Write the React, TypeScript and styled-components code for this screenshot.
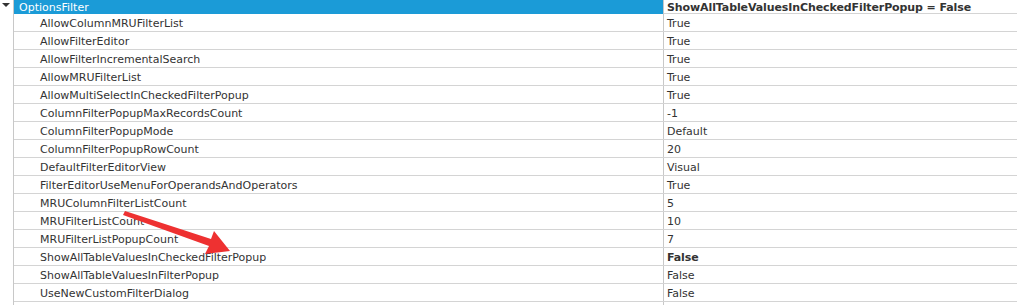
import React from "react";
import styled, { createGlobalStyle } from "styled-components";

const Global = createGlobalStyle`
  html, body { margin: 0; padding: 0; background: #ffffff; }
  body { font-family: "DejaVu Sans", Verdana, sans-serif; }
`;

const Grid = styled.div`
  position: relative;
  width: 1017px;
  height: 305px;
  overflow: hidden;
  display: grid;
  grid-template-columns: 14px 1fr;
  background: #fff;
`;

const Gutter = styled.div`
  border-right: 1px solid #c8c8c8;
`;

const Caret = styled.div`
  width: 0;
  height: 0;
  margin: 3px 0 0 2px;
  border-left: 4px solid transparent;
  border-right: 4px solid transparent;
  border-top: 4px solid #333;
`;

const Body = styled.div`
  display: flex;
  flex-direction: column;
`;

const Row = styled.div<{ $header?: boolean }>`
  display: grid;
  grid-template-columns: 650px 1fr;
  height: ${(p) => (p.$header ? "13px" : "17px")};
  border-bottom: 1px solid #d4d4d4;
  flex-shrink: 0;
`;

const NameCell = styled.div<{ $header?: boolean }>`
  display: flex;
  align-items: center;
  padding-left: ${(p) => (p.$header ? "5px" : "26px")};
  padding-top: 1px;
  background: ${(p) => (p.$header ? "#1b9bd7" : "#fff")};
  color: ${(p) => (p.$header ? "#ffffff" : "#333333")};
  font-size: 11px;
  font-family: "DejaVu Sans", Verdana, sans-serif;
  white-space: nowrap;
  border-right: 1px solid #c8c8c8;
`;

const ValueCell = styled.div<{ $bold?: boolean }>`
  display: flex;
  align-items: center;
  padding-left: 3px;
  padding-top: 1px;
  color: #333333;
  font-size: 11px;
  font-family: "DejaVu Sans", Verdana, sans-serif;
  font-weight: ${(p) => (p.$bold ? 700 : 400)};
  letter-spacing: ${(p) => (p.$bold ? "-0.1px" : "0")};
  white-space: nowrap;
`;

const Arrow = styled.svg`
  position: absolute;
  left: 0;
  top: 0;
  pointer-events: none;
`;

const rows: [string, string, boolean?][] = [
  ["AllowColumnMRUFilterList", "True"],
  ["AllowFilterEditor", "True"],
  ["AllowFilterIncrementalSearch", "True"],
  ["AllowMRUFilterList", "True"],
  ["AllowMultiSelectInCheckedFilterPopup", "True"],
  ["ColumnFilterPopupMaxRecordsCount", "-1"],
  ["ColumnFilterPopupMode", "Default"],
  ["ColumnFilterPopupRowCount", "20"],
  ["DefaultFilterEditorView", "Visual"],
  ["FilterEditorUseMenuForOperandsAndOperators", "True"],
  ["MRUColumnFilterListCount", "5"],
  ["MRUFilterListCount", "10"],
  ["MRUFilterListPopupCount", "7"],
  ["ShowAllTableValuesInCheckedFilterPopup", "False", true],
  ["ShowAllTableValuesInFilterPopup", "False"],
  ["UseNewCustomFilterDialog", "False"],
  ["", ""],
];

export default function App() {
  return (
    <>
      <Global />
      <Grid>
        <Gutter>
          <Caret />
        </Gutter>
        <Body>
          <Row $header>
            <NameCell $header>OptionsFilter</NameCell>
            <ValueCell $bold>ShowAllTableValuesInCheckedFilterPopup = False</ValueCell>
          </Row>
          {rows.map(([n, v, b], i) => (
            <Row key={i}>
              <NameCell>{n}</NameCell>
              <ValueCell $bold={!!b}>{v}</ValueCell>
            </Row>
          ))}
        </Body>
        <Arrow width="1017" height="305" viewBox="0 0 1017 305">
          <polygon
            points="125,211 211,239 214,231 230,251 205,254 209,246 123,215"
            fill="#ee3131"
          />
        </Arrow>
      </Grid>
    </>
  );
}
